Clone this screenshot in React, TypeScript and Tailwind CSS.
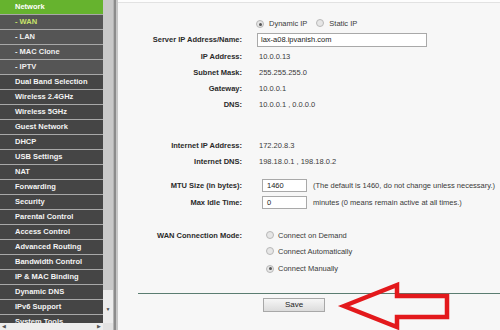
import React from "react";

const menu: { t: string; sub?: boolean; active?: boolean; head?: boolean }[] = [
  { t: "Network", head: true },
  { t: "- WAN", sub: true, active: true },
  { t: "- LAN", sub: true },
  { t: "- MAC Clone", sub: true },
  { t: "- IPTV", sub: true },
  { t: "Dual Band Selection" },
  { t: "Wireless 2.4GHz" },
  { t: "Wireless 5GHz" },
  { t: "Guest Network" },
  { t: "DHCP" },
  { t: "USB Settings" },
  { t: "NAT" },
  { t: "Forwarding" },
  { t: "Security" },
  { t: "Parental Control" },
  { t: "Access Control" },
  { t: "Advanced Routing" },
  { t: "Bandwidth Control" },
  { t: "IP & MAC Binding" },
  { t: "Dynamic DNS" },
  { t: "IPv6 Support" },
  { t: "System Tools" },
];

function Radio({ on }: { on?: boolean }) {
  return (
    <span className="inline-flex items-center justify-center w-[8px] h-[8px] rounded-full border border-[#b8b8b8] bg-[#e6e6e6] shrink-0">
      {on && <span className="w-[3px] h-[3px] rounded-full bg-[#555]" />}
    </span>
  );
}

function Row({ label, h, children }: { label?: string; h: string; children?: React.ReactNode }) {
  return (
    <div className={`flex items-center ${h}`}>
      <div className="w-[124px] text-right font-bold text-[#2a2a2a] whitespace-nowrap">{label}</div>
      <div className="ml-[17px] flex items-center whitespace-nowrap text-[#3a3a3a]">{children}</div>
    </div>
  );
}

function itemClass(m: { sub?: boolean; active?: boolean; head?: boolean }) {
  if (m.head) return "bg-[#66b32e] text-white";
  if (m.active) return "bg-[#555555] text-[#c8e36a]";
  if (m.sub) return "bg-[#555555] text-[#f0f0f0]";
  return "bg-[#454545] text-[#f4f4f4]";
}

export default function App() {
  return (
    <div className="relative w-[500px] h-[330px] overflow-hidden flex bg-[#f7f7f7] font-['Liberation_Sans',Arial,sans-serif] text-[7.5px] leading-none">
      {/* Sidebar */}
      <div className="relative w-[103px] h-full bg-[#474747] flex flex-col">
        {menu.map((m, i) => (
          <div
            key={i}
            className={`shrink-0 h-[15px] flex items-center pl-[15px] font-bold border-b border-[#a8a8a8] whitespace-nowrap ${itemClass(m)}`}
          >
            {m.t}
          </div>
        ))}
        {/* horizontal scrollbar */}
        <div className="absolute left-0 bottom-0 w-[103px] h-[7px] bg-[#ededed] flex items-center justify-between px-[2px] text-[#555] text-[5px]">
          <span>◀</span>
          <span>▶</span>
        </div>
      </div>
      {/* vertical scrollbar */}
      <div className="w-[10px] h-full flex flex-col bg-[#ececec]">
        <div className="h-[290px] bg-[#c9c9c9]" />
        <div className="flex-1 flex items-end justify-center pb-[11px] text-[#444] text-[5px]">▼</div>
        <div className="h-[7px] bg-[#e2e2e2]" />
      </div>
      <div className="w-[1px] h-full bg-[#b4b4b4]" />
      <div className="w-[2px] h-full bg-[#8c8c8c]" />
      <div className="w-[2px] h-full bg-[#c6c6c6]" />

      {/* Main */}
      <div className="flex-1 h-full flex flex-col">
        <div className="h-[3px] bg-[#fdfdfd] border-b border-[#e2e2e2]" />
        <div className="h-[13px]" />
        <Row h="h-[16px]">
          <div className="flex items-center -ml-[3px]">
            <Radio on />
            <span className="ml-[5px]">Dynamic IP</span>
            <span className="ml-[9px]"><Radio /></span>
            <span className="ml-[5px]">Static IP</span>
          </div>
        </Row>
        <Row label="Server IP Address/Name:" h="h-[16px]">
          <div className="-ml-[2px] w-[170px] h-[14px] border border-[#a9a9a9] bg-white flex items-center pl-[3px] text-[#222]">lax-a08.ipvanish.com</div>
        </Row>
        <Row label="IP Address:" h="h-[17px]">10.0.0.13</Row>
        <Row label="Subnet Mask:" h="h-[16px]">255.255.255.0</Row>
        <Row label="Gateway:" h="h-[16px]">10.0.0.1</Row>
        <Row label="DNS:" h="h-[16px]">10.0.0.1 , 0.0.0.0</Row>
        <div className="h-[25px]" />
        <Row label="Internet IP Address:" h="h-[16px]">172.20.8.3</Row>
        <Row label="Internet DNS:" h="h-[16px]">198.18.0.1 , 198.18.0.2</Row>
        <div className="h-[7px]" />
        <Row label="MTU Size (in bytes):" h="h-[17px]">
          <div className="ml-[3px] w-[45px] h-[13px] border border-[#a9a9a9] bg-white flex items-center pl-[4px] text-[#222]">1460</div>
          <span className="ml-[6px]">(The default is 1460, do not change unless necessary.)</span>
        </Row>
        <Row label="Max Idle Time:" h="h-[17px]">
          <div className="ml-[3px] w-[45px] h-[13px] border border-[#a9a9a9] bg-white flex items-center pl-[4px] text-[#222]">0</div>
          <span className="ml-[6px]">minutes (0 means remain active at all times.)</span>
        </Row>
        <div className="h-[17px]" />
        <Row label="WAN Connection Mode:" h="h-[16px]">
          <span className="ml-[7px]"><Radio /></span>
          <span className="ml-[4px]">Connect on Demand</span>
        </Row>
        <Row h="h-[16px]">
          <span className="ml-[7px]"><Radio /></span>
          <span className="ml-[4px]">Connect Automatically</span>
        </Row>
        <Row h="h-[17px]">
          <span className="ml-[7px]"><Radio on /></span>
          <span className="ml-[4px]">Connect Manually</span>
        </Row>
        <div className="h-[16px]" />
        <div className="ml-[20px] h-[1px] bg-[#5b7d71]" />
        <div className="h-[4px]" />
        <div className="flex">
          <div className="ml-[145px] w-[62px] h-[14px] border border-[#a8a8a8] bg-gradient-to-b from-[#f6f6f6] to-[#dcdcdc] flex items-center justify-center text-[8px] text-[#222]">
            Save
          </div>
        </div>
      </div>

      {/* Red arrow annotation */}
      <svg className="absolute left-0 top-0 pointer-events-none" width="500" height="330" viewBox="0 0 500 330">
        <polygon
          points="344,306 397,285 397,296 447,296 447,317 397,317 397,327"
          fill="none"
          stroke="#e3191c"
          strokeWidth="4.5"
          strokeLinejoin="miter"
        />
      </svg>
    </div>
  );
}
